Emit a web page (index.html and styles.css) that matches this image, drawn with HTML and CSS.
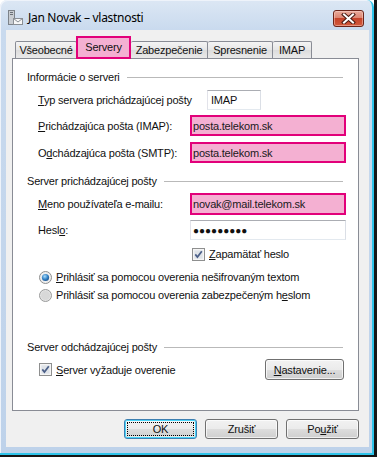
FILE: index.html
```html
<!DOCTYPE html>
<html lang="sk">
<head>
  <meta charset="UTF-8">
  <title>Jan Novak – vlastnosti</title>
  <link rel="stylesheet" href="styles.css">
</head>
<body>
  <div class="screen">
    <div class="window">
      <div class="titlebar">
        <svg class="app-icon" width="16" height="16" viewBox="0 0 16 16">
          <rect x="1.5" y="0.5" width="6" height="14" fill="#c9cdd2" stroke="#7d838a"/>
          <rect x="3" y="2" width="3" height="1" fill="#6a7077"/>
          <rect x="3" y="4" width="3" height="1" fill="#6a7077"/>
          <rect x="6.5" y="8.5" width="9" height="6" fill="#f7f7f7" stroke="#8a8f95"/>
          <path d="M6.5 8.5 L11 12 L15.5 8.5" fill="none" stroke="#8a8f95"/>
        </svg>
        <span class="title">Jan Novak – vlastnosti</span>
        <div class="close-btn">
          <svg width="15" height="11" viewBox="0 0 15 11">
            <path d="M3 1.5 L12 9.5 M12 1.5 L3 9.5" stroke="#4a1a12" stroke-width="4" stroke-linecap="square"/>
            <path d="M3 1.5 L12 9.5 M12 1.5 L3 9.5" stroke="#ffffff" stroke-width="2" stroke-linecap="square"/>
          </svg>
        </div>
      </div>

      <div class="client">
        <div class="tabs">
          <div class="tab tab-first">Všeobecné</div>
          <div class="tab tab-active">Servery</div>
          <div class="tab">Zabezpečenie</div>
          <div class="tab">Spresnenie</div>
          <div class="tab">IMAP</div>
        </div>

        <div class="panel">
          <div class="group-title g1"><span>Informácie o serveri</span></div>

          <div class="row r-typ">
            <span class="label label-wide"><u>T</u>yp servera prichádzajúcej pošty</span>
            <div class="field field-short">IMAP</div>
          </div>
          <div class="row r-in">
            <span class="label"><u>P</u>richádzajúca pošta (IMAP):</span>
            <div class="field field-mark">posta.telekom.sk</div>
          </div>
          <div class="row r-out">
            <span class="label">O<u>d</u>chádzajúca pošta (SMTP):</span>
            <div class="field field-mark">posta.telekom.sk</div>
          </div>

          <div class="group-title g2"><span>Server prichádzajúcej pošty</span></div>

          <div class="row r-user">
            <span class="label"><u>M</u>eno používateľa e-mailu:</span>
            <div class="field field-mark">novak@mail.telekom.sk</div>
          </div>
          <div class="row r-pass">
            <span class="label">Hesl<u>o</u>:</span>
            <div class="field field-pass">●●●●●●●●●</div>
          </div>

          <div class="check-row r-remember">
            <svg class="checkbox" width="13" height="13" viewBox="0 0 13 13">
              <rect x="0.5" y="0.5" width="12" height="12" fill="#f4f4f4" stroke="#8e8f8f"/>
              <rect x="2" y="2" width="9" height="9" fill="#dfe3e8" stroke="#f8f8f8" stroke-width="0.6"/>
              <path d="M3.3 6.4 L5.4 9 L9.8 3.2" fill="none" stroke="#4b5f88" stroke-width="1.7"/>
            </svg>
            <span><u>Z</u>apamätať heslo</span>
          </div>

          <div class="check-row r-radio1">
            <svg class="radio" width="13" height="13" viewBox="0 0 13 13">
              <defs>
                <radialGradient id="dot" cx="0.4" cy="0.35" r="0.7">
                  <stop offset="0" stop-color="#a9dcfb"/>
                  <stop offset="0.6" stop-color="#2f7fc4"/>
                  <stop offset="1" stop-color="#1d4f88"/>
                </radialGradient>
              </defs>
              <circle cx="6.5" cy="6.5" r="6" fill="#eeeeee" stroke="#8e8f8f"/>
              <circle cx="6.5" cy="6.5" r="3.6" fill="url(#dot)"/>
            </svg>
            <span><u>P</u>rihlásiť sa pomocou overenia nešifrovaným textom</span>
          </div>
          <div class="check-row r-radio2">
            <svg class="radio" width="13" height="13" viewBox="0 0 13 13">
              <circle cx="6.5" cy="6.5" r="6" fill="#e4e4e4" stroke="#9a9b9b"/>
              <circle cx="6.5" cy="6.5" r="4.5" fill="#d8d8d8"/>
            </svg>
            <span>Prihlásiť sa pomocou overenia zabezpečeným h<u>e</u>slom</span>
          </div>

          <div class="group-title g3"><span>Server odchádzajúcej pošty</span></div>

          <div class="check-row r-auth">
            <svg class="checkbox" width="13" height="13" viewBox="0 0 13 13">
              <rect x="0.5" y="0.5" width="12" height="12" fill="#f4f4f4" stroke="#8e8f8f"/>
              <rect x="2" y="2" width="9" height="9" fill="#dfe3e8" stroke="#f8f8f8" stroke-width="0.6"/>
              <path d="M3.3 6.4 L5.4 9 L9.8 3.2" fill="none" stroke="#4b5f88" stroke-width="1.7"/>
            </svg>
            <span><u>S</u>erver vyžaduje overenie</span>
            <div class="btn btn-settings"><u>N</u>astavenie...</div>
          </div>
        </div>

        <div class="buttons">
          <div class="btn btn-default"><span class="focus">OK</span></div>
          <div class="btn">Zrušiť</div>
          <div class="btn">Po<u>u</u>žiť</div>
        </div>
      </div>
    </div>
  </div>
</body>
</html>
```

FILE: styles.css
```css
html, body {
  margin: 0;
  padding: 0;
  background: #ffffff;
}

.screen {
  width: 377px;
  height: 457px;
  box-sizing: border-box;
  border-right: 3px solid #161616;
  border-bottom: 2px solid #161616;
  overflow: hidden;
}

.window {
  width: 374px;
  height: 455px;
  box-sizing: border-box;
  border-right: 2px solid #2ec4ea;
  border-bottom: 2px solid #2ec4ea;
  border-radius: 7px 7px 0 0;
  background: linear-gradient(#dce7f4 0, #c9daee 30px, #bed2ea 100%);
  box-shadow: inset 1px 1px 0 #eef3fa;
  display: flex;
  flex-direction: column;
  font-family: "Liberation Sans", Arial, sans-serif;
  font-size: 11px;
  letter-spacing: -0.2px;
  color: #111;
}

/* title bar */
.titlebar {
  height: 30px;
  display: flex;
  align-items: flex-start;
  padding: 10px 0 0 7px;
  box-sizing: border-box;
}

.app-icon {
  flex: none;
}

.title {
  font-family: "Noto Sans", sans-serif;
  font-size: 12px;
  letter-spacing: -0.3px;
  margin: -1px 0 0 5px;
  color: #000;
}

.close-btn {
  margin-left: auto;
  margin-right: 8px;
  width: 31px;
  height: 17px;
  box-sizing: border-box;
  border: 1px solid #6b2419;
  border-radius: 3px;
  background: linear-gradient(#e9ab9c, #dd8572 45%, #c6432a 50%, #d25a3c 100%);
  box-shadow: inset 0 0 0 1px rgba(255, 220, 210, 0.45);
  display: flex;
  align-items: center;
  justify-content: center;
}

/* client area */
.client {
  width: 363px;
  height: 417px;
  margin-left: 6px;
  background: #f0f0f0;
  box-sizing: border-box;
  padding: 6px 10px 0 6px;
}

.tabs {
  height: 22px;
  display: flex;
  align-items: flex-end;
  padding-left: 3px;
  position: relative;
  z-index: 1;
}

.tab {
  height: 17px;
  box-sizing: border-box;
  padding: 0 4px;
  border: 1px solid #898c95;
  border-bottom: none;
  border-left: none;
  border-radius: 2px 2px 0 0;
  background: linear-gradient(#f4f4f4, #e6e6e6 50%, #dcdcdc 51%, #e9e9e9);
  display: flex;
  align-items: center;
  justify-content: center;
}

.tab-first {
  border-left: 1px solid #898c95;
  width: 62px;
}

.tab-active {
  height: 23px;
  margin-bottom: -1px;
  margin-left: -1px;
  width: 55px;
  border: 2px solid #e2007a;
  background: #f4b0d2;
  align-items: flex-start;
  padding-top: 3px;
  border-radius: 0;
}

.tab:nth-child(3) { width: 77px; border-left: none; }
.tab:nth-child(4) { width: 65px; }
.tab:nth-child(5) { width: 39px; }

.panel {
  height: 353px;
  box-sizing: border-box;
  border: 1px solid #898c95;
  background: #ffffff;
  display: flex;
  flex-direction: column;
}

.group-title {
  height: 14px;
  display: flex;
  align-items: center;
  padding-left: 14px;
  padding-right: 15px;
}

.group-title::after {
  content: "";
  flex: 1;
  height: 1px;
  background: #b9b9b9;
  margin-left: 7px;
}

.g1 { margin-top: 11px; }
.g2 { margin-top: 11px; }
.g3 { margin-top: 38px; }

.row {
  display: flex;
  align-items: center;
  padding-left: 25px;
}

.label {
  width: 152px;
  flex: none;
}

.label-wide {
  width: 169px;
}

.r-typ { height: 20px; margin-top: 6px; }
.r-in { height: 21px; margin-top: 5px; }
.r-out { height: 21px; margin-top: 6px; }
.r-user { height: 22px; margin-top: 5px; }
.r-pass { height: 20px; margin-top: 5px; }

.field {
  height: 100%;
  box-sizing: border-box;
  display: flex;
  align-items: center;
}

.field-short {
  width: 54px;
  border: 1px solid #abadb3;
  border-color: #abadb3 #dbdfe6 #e3e9ef #e2e3ea;
  padding-left: 3px;
}

.field-mark {
  width: 156px;
  border: 2px solid #e2007a;
  background: #f4b0d2;
  padding-left: 1px;
  color: #1a1a1a;
}

.field-pass {
  width: 156px;
  border: 1px solid #abadb3;
  border-color: #abadb3 #dbdfe6 #e3e9ef #e2e3ea;
  padding-left: 2px;
  font-size: 10px;
  letter-spacing: 0;
}

.check-row {
  display: flex;
  align-items: center;
  height: 14px;
}

.check-row svg {
  flex: none;
  margin-right: 4px;
}

.r-remember { padding-left: 179px; margin-top: 7px; }
.r-radio1 { padding-left: 26px; margin-top: 9px; }
.r-radio2 { padding-left: 26px; margin-top: 4px; }

.r-auth {
  padding-left: 26px;
  margin-top: 5px;
  height: 21px;
}

.btn {
  height: 20px;
  box-sizing: border-box;
  border: 1px solid #707070;
  border-radius: 3px;
  background: linear-gradient(#f2f2f2, #ebebeb 50%, #dddddd 51%, #cfcfcf);
  box-shadow: inset 0 0 0 1px rgba(255, 255, 255, 0.7);
  display: flex;
  align-items: center;
  justify-content: center;
}

.btn-settings {
  margin-left: auto;
  margin-right: 14px;
  width: 79px;
  height: 21px;
}

.buttons {
  display: flex;
  justify-content: flex-end;
  gap: 8px;
  margin-top: 8px;
}

.buttons .btn {
  width: 73px;
}

.btn-default {
  border-color: #3c7fb1;
  box-shadow: inset 0 0 0 1px #48d4f8, inset 0 0 0 2px rgba(255, 255, 255, 0.5);
}

.focus {
  flex: 1;
  align-self: stretch;
  margin: 2px;
  border: 1px dotted #000;
  display: flex;
  align-items: center;
  justify-content: center;
}
```
